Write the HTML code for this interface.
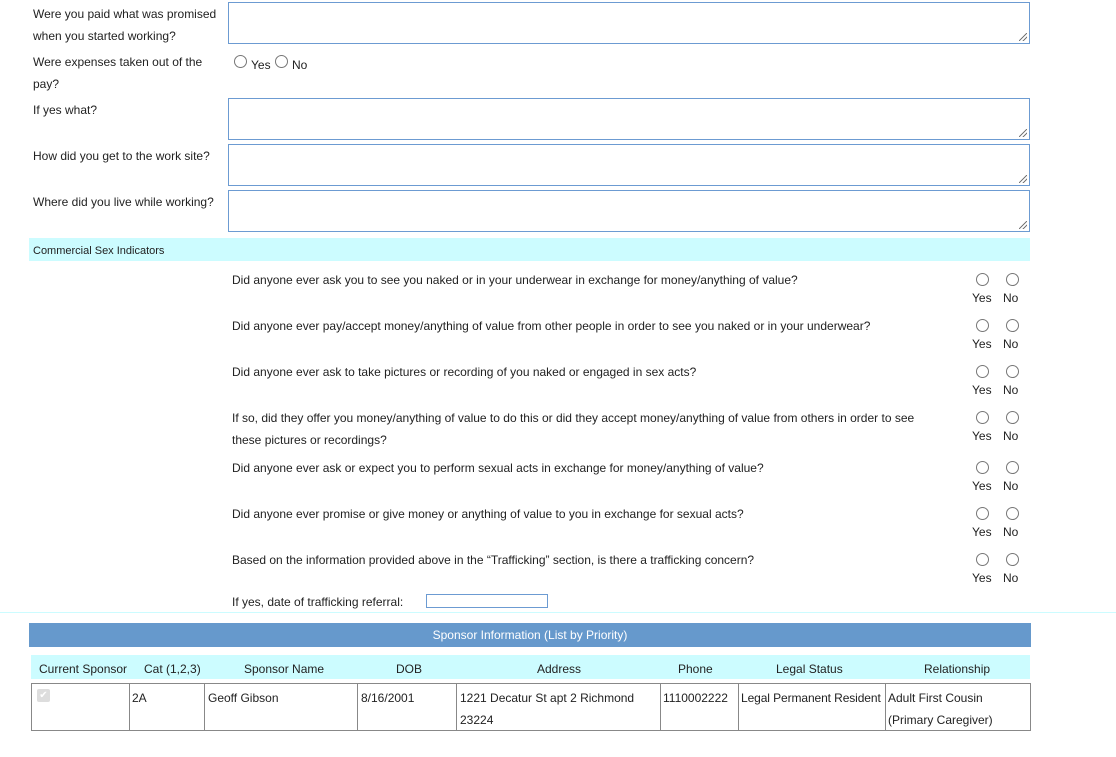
<!DOCTYPE html>
<html><head><meta charset="utf-8"><style>
*{margin:0;padding:0;box-sizing:border-box}
body{width:1116px;height:757px;position:relative;background:#fff;font-family:"Liberation Sans",Arial,sans-serif;font-size:12px;color:#222;overflow:hidden}
.a{position:absolute;white-space:nowrap;margin-top:1px}
.b{margin-top:0!important}
.ta{position:absolute;left:228px;width:802px;height:42px;border:1px solid #6c9bd2;background:#fff}
.ta:after{content:"";position:absolute;right:2px;bottom:2px;width:8px;height:8px;background:linear-gradient(135deg,transparent 45%,#777 45%,#777 55%,transparent 55%,transparent 70%,#777 70%,#777 80%,transparent 80%)}
.r{position:absolute;width:13px;height:13px;border:1px solid #777;border-radius:50%;background:#fff}
.c{position:absolute;top:0;height:100%;border-left:1px solid #888}
</style></head><body>
<div class="a" style="left:33px;top:6px">Were you paid what was promised</div>
<div class="a" style="left:33px;top:28px">when you started working?</div>
<div class="ta" style="top:2px"></div>
<div class="a" style="left:33px;top:54px">Were expenses taken out of the</div>
<div class="a" style="left:33px;top:76px">pay?</div>
<div class="r" style="left:234px;top:55px"></div><div class="a" style="left:251px;top:57px">Yes</div>
<div class="r" style="left:275px;top:55px"></div><div class="a" style="left:292px;top:57px">No</div>
<div class="a" style="left:33px;top:102px">If yes what?</div>
<div class="ta" style="top:98px"></div>
<div class="a" style="left:33px;top:148px">How did you get to the work site?</div>
<div class="ta" style="top:144px"></div>
<div class="a" style="left:33px;top:194px">Where did you live while working?</div>
<div class="ta" style="top:190px"></div>
<div class="a b" style="left:29px;top:238px;width:1001px;height:23px;background:#ccfcff;font-size:11px;padding:7px 0 0 4px">Commercial Sex Indicators</div>

<div class="a" style="left:232px;top:272px">Did anyone ever ask you to see you naked or in your underwear in exchange for money/anything of value?</div>
<div class="a" style="left:232px;top:318px">Did anyone ever pay/accept money/anything of value from other people in order to see you naked or in your underwear?</div>
<div class="a" style="left:232px;top:364px">Did anyone ever ask to take pictures or recording of you naked or engaged in sex acts?</div>
<div class="a" style="left:232px;top:410px">If so, did they offer you money/anything of value to do this or did they accept money/anything of value from others in order to see</div>
<div class="a" style="left:232px;top:432px">these pictures or recordings?</div>
<div class="a" style="left:232px;top:460px">Did anyone ever ask or expect you to perform sexual acts in exchange for money/anything of value?</div>
<div class="a" style="left:232px;top:506px">Did anyone ever promise or give money or anything of value to you in exchange for sexual acts?</div>
<div class="a" style="left:232px;top:552px">Based on the information provided above in the “Trafficking” section, is there a trafficking concern?</div>

<div class="r" style="left:976px;top:273px"></div><div class="r" style="left:1006px;top:273px"></div><div class="a" style="left:972px;top:290px">Yes</div><div class="a" style="left:1003px;top:290px">No</div>
<div class="r" style="left:976px;top:319px"></div><div class="r" style="left:1006px;top:319px"></div><div class="a" style="left:972px;top:336px">Yes</div><div class="a" style="left:1003px;top:336px">No</div>
<div class="r" style="left:976px;top:365px"></div><div class="r" style="left:1006px;top:365px"></div><div class="a" style="left:972px;top:382px">Yes</div><div class="a" style="left:1003px;top:382px">No</div>
<div class="r" style="left:976px;top:411px"></div><div class="r" style="left:1006px;top:411px"></div><div class="a" style="left:972px;top:428px">Yes</div><div class="a" style="left:1003px;top:428px">No</div>
<div class="r" style="left:976px;top:461px"></div><div class="r" style="left:1006px;top:461px"></div><div class="a" style="left:972px;top:478px">Yes</div><div class="a" style="left:1003px;top:478px">No</div>
<div class="r" style="left:976px;top:507px"></div><div class="r" style="left:1006px;top:507px"></div><div class="a" style="left:972px;top:524px">Yes</div><div class="a" style="left:1003px;top:524px">No</div>
<div class="r" style="left:976px;top:553px"></div><div class="r" style="left:1006px;top:553px"></div><div class="a" style="left:972px;top:570px">Yes</div><div class="a" style="left:1003px;top:570px">No</div>

<div class="a" style="left:232px;top:594px">If yes, date of trafficking referral:</div>
<div class="a b" style="left:426px;top:594px;width:122px;height:14px;border:1px solid #6c9bd2"></div>
<div class="a b" style="left:0;top:612px;width:1116px;height:1px;background:#ccfcff"></div>

<div class="a b" style="left:29px;top:623px;width:1002px;height:24px;background:#6699cc;color:#fff;text-align:center;font-size:12px;line-height:25px">Sponsor Information (List by Priority)</div>
<div class="a b" style="left:31px;top:655px;width:999px;height:24px;background:#ccfcff"></div>
<div class="a" style="left:39px;top:661px">Current Sponsor</div>
<div class="a" style="left:144px;top:661px">Cat (1,2,3)</div>
<div class="a" style="left:244px;top:661px">Sponsor Name</div>
<div class="a" style="left:396px;top:661px">DOB</div>
<div class="a" style="left:537px;top:661px">Address</div>
<div class="a" style="left:678px;top:661px">Phone</div>
<div class="a" style="left:776px;top:661px">Legal Status</div>
<div class="a" style="left:924px;top:661px">Relationship</div>

<div class="a b" style="left:31px;top:683px;width:1000px;height:48px;border:1px solid #888">
<div class="c" style="left:97px"></div><div class="c" style="left:172px"></div><div class="c" style="left:325px"></div><div class="c" style="left:424px"></div><div class="c" style="left:628px"></div><div class="c" style="left:706px"></div><div class="c" style="left:853px"></div>
</div>
<div class="a b" style="left:37px;top:689px;width:13px;height:13px;background:#ddd;border-radius:2px;color:#fff;font-size:10px;line-height:13px;text-align:center">✔</div>
<div class="a" style="left:132px;top:690px">2A</div>
<div class="a" style="left:208px;top:690px">Geoff Gibson</div>
<div class="a" style="left:361px;top:690px">8/16/2001</div>
<div class="a" style="left:460px;top:690px">1221 Decatur St apt 2 Richmond</div>
<div class="a" style="left:460px;top:712px">23224</div>
<div class="a" style="left:663px;top:690px">1110002222</div>
<div class="a" style="left:741px;top:690px;letter-spacing:-0.1px">Legal Permanent Resident</div>
<div class="a" style="left:888px;top:690px">Adult First Cousin</div>
<div class="a" style="left:888px;top:712px">(Primary Caregiver)</div>
</body></html>
